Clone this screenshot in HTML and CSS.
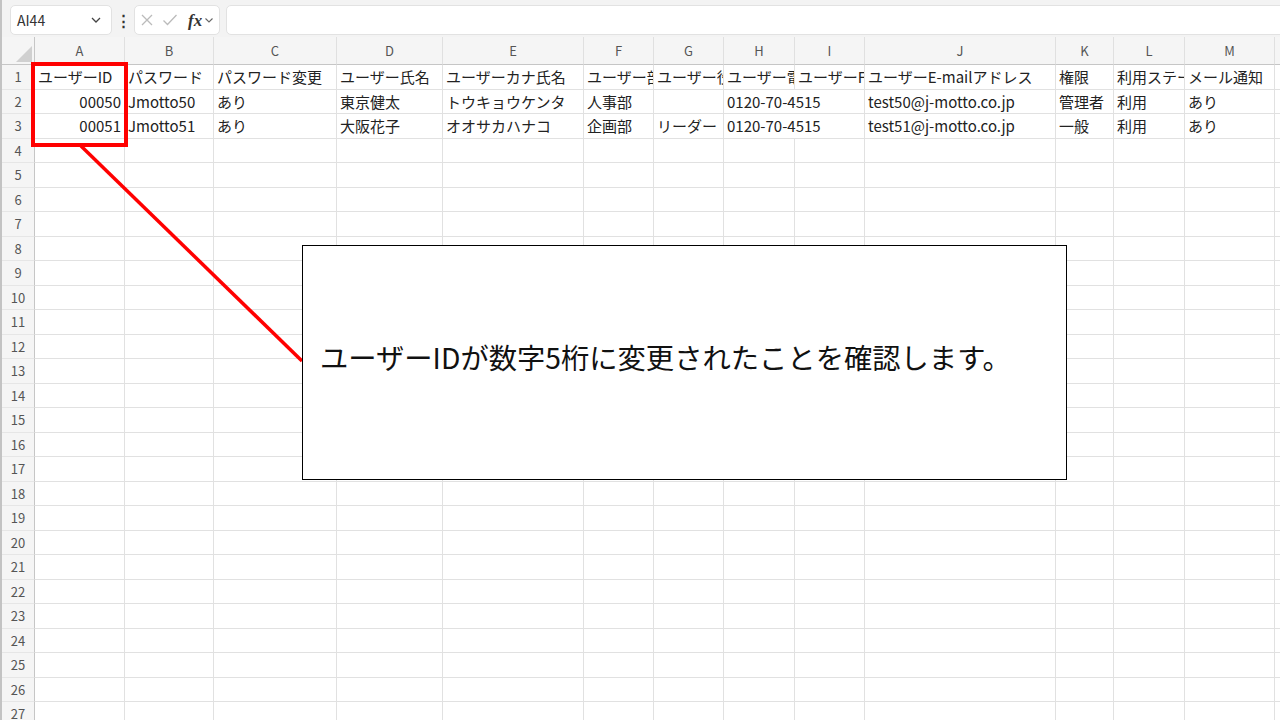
FILE: index.html
```html
<!DOCTYPE html>
<html lang="ja">
<head>
<meta charset="utf-8">
<title>Sheet</title>
<link rel="stylesheet" href="styles.css">
</head>
<body>
<div class="page">
  <div class="toolbar">
    <div class="namebox">
      <span class="name">AI44</span>
      <svg class="chev" width="12" height="8" viewBox="0 0 12 8"><path d="M2 2l4 4 4-4" fill="none" stroke="#444" stroke-width="1.3"/></svg>
    </div>
    <div class="dots">⋮</div>
    <div class="fbtns">
      <svg width="14" height="14" viewBox="0 0 14 14"><path d="M2 2l10 10M12 2L2 12" stroke="#bbb" stroke-width="1.3" fill="none"/></svg>
      <svg width="16" height="14" viewBox="0 0 16 14"><path d="M1.5 7.5l4 4L14.5 2" stroke="#bbb" stroke-width="1.3" fill="none"/></svg>
      <span class="fx">fx</span>
      <svg width="10" height="7" viewBox="0 0 10 7"><path d="M1.5 1.5l3.5 3.5 3.5-3.5" fill="none" stroke="#666" stroke-width="1.1"/></svg>
    </div>
    <div class="finput"></div>
  </div>

  <div class="sheet">
    <div class="row head">
      <div class="corner"><span class="tri"></span></div>
      <div>A</div><div>B</div><div>C</div><div>D</div><div>E</div><div>F</div><div>G</div><div>H</div><div>I</div><div>J</div><div>K</div><div>L</div><div>M</div><div></div>
    </div>
    <div class="row">
      <div class="rh">1</div>
      <div>ユーザーID</div><div>パスワード</div><div>パスワード変更</div><div>ユーザー氏名</div><div>ユーザーカナ氏名</div><div>ユーザー部署</div><div>ユーザー役職</div><div>ユーザー電話番号</div><div>ユーザーFAX番号</div><div>ユーザーE-mailアドレス</div><div>権限</div><div>利用ステータス</div><div>メール通知</div><div></div>
    </div>
    <div class="row">
      <div class="rh">2</div>
      <div class="num">00050</div><div>Jmotto50</div><div>あり</div><div>東京健太</div><div>トウキョウケンタ</div><div>人事部</div><div></div><div class="span2">0120-70-4515</div><div>test50@j-motto.co.jp</div><div>管理者</div><div>利用</div><div>あり</div><div></div>
    </div>
    <div class="row">
      <div class="rh">3</div>
      <div class="num">00051</div><div>Jmotto51</div><div>あり</div><div>大阪花子</div><div>オオサカハナコ</div><div>企画部</div><div>リーダー</div><div class="span2">0120-70-4515</div><div>test51@j-motto.co.jp</div><div>一般</div><div>利用</div><div>あり</div><div></div>
    </div>
    <div class="row"><div class="rh">4</div><div></div><div></div><div></div><div></div><div></div><div></div><div></div><div></div><div></div><div></div><div></div><div></div><div></div><div></div></div>
    <div class="row"><div class="rh">5</div><div></div><div></div><div></div><div></div><div></div><div></div><div></div><div></div><div></div><div></div><div></div><div></div><div></div><div></div></div>
    <div class="row"><div class="rh">6</div><div></div><div></div><div></div><div></div><div></div><div></div><div></div><div></div><div></div><div></div><div></div><div></div><div></div><div></div></div>
    <div class="row"><div class="rh">7</div><div></div><div></div><div></div><div></div><div></div><div></div><div></div><div></div><div></div><div></div><div></div><div></div><div></div><div></div></div>
    <div class="row"><div class="rh">8</div><div></div><div></div><div></div><div></div><div></div><div></div><div></div><div></div><div></div><div></div><div></div><div></div><div></div><div></div></div>
    <div class="row"><div class="rh">9</div><div></div><div></div><div></div><div></div><div></div><div></div><div></div><div></div><div></div><div></div><div></div><div></div><div></div><div></div></div>
    <div class="row"><div class="rh">10</div><div></div><div></div><div></div><div></div><div></div><div></div><div></div><div></div><div></div><div></div><div></div><div></div><div></div><div></div></div>
    <div class="row"><div class="rh">11</div><div></div><div></div><div></div><div></div><div></div><div></div><div></div><div></div><div></div><div></div><div></div><div></div><div></div><div></div></div>
    <div class="row"><div class="rh">12</div><div></div><div></div><div></div><div></div><div></div><div></div><div></div><div></div><div></div><div></div><div></div><div></div><div></div><div></div></div>
    <div class="row"><div class="rh">13</div><div></div><div></div><div></div><div></div><div></div><div></div><div></div><div></div><div></div><div></div><div></div><div></div><div></div><div></div></div>
    <div class="row"><div class="rh">14</div><div></div><div></div><div></div><div></div><div></div><div></div><div></div><div></div><div></div><div></div><div></div><div></div><div></div><div></div></div>
    <div class="row"><div class="rh">15</div><div></div><div></div><div></div><div></div><div></div><div></div><div></div><div></div><div></div><div></div><div></div><div></div><div></div><div></div></div>
    <div class="row"><div class="rh">16</div><div></div><div></div><div></div><div></div><div></div><div></div><div></div><div></div><div></div><div></div><div></div><div></div><div></div><div></div></div>
    <div class="row"><div class="rh">17</div><div></div><div></div><div></div><div></div><div></div><div></div><div></div><div></div><div></div><div></div><div></div><div></div><div></div><div></div></div>
    <div class="row"><div class="rh">18</div><div></div><div></div><div></div><div></div><div></div><div></div><div></div><div></div><div></div><div></div><div></div><div></div><div></div><div></div></div>
    <div class="row"><div class="rh">19</div><div></div><div></div><div></div><div></div><div></div><div></div><div></div><div></div><div></div><div></div><div></div><div></div><div></div><div></div></div>
    <div class="row"><div class="rh">20</div><div></div><div></div><div></div><div></div><div></div><div></div><div></div><div></div><div></div><div></div><div></div><div></div><div></div><div></div></div>
    <div class="row"><div class="rh">21</div><div></div><div></div><div></div><div></div><div></div><div></div><div></div><div></div><div></div><div></div><div></div><div></div><div></div><div></div></div>
    <div class="row"><div class="rh">22</div><div></div><div></div><div></div><div></div><div></div><div></div><div></div><div></div><div></div><div></div><div></div><div></div><div></div><div></div></div>
    <div class="row"><div class="rh">23</div><div></div><div></div><div></div><div></div><div></div><div></div><div></div><div></div><div></div><div></div><div></div><div></div><div></div><div></div></div>
    <div class="row"><div class="rh">24</div><div></div><div></div><div></div><div></div><div></div><div></div><div></div><div></div><div></div><div></div><div></div><div></div><div></div><div></div></div>
    <div class="row"><div class="rh">25</div><div></div><div></div><div></div><div></div><div></div><div></div><div></div><div></div><div></div><div></div><div></div><div></div><div></div><div></div></div>
    <div class="row"><div class="rh">26</div><div></div><div></div><div></div><div></div><div></div><div></div><div></div><div></div><div></div><div></div><div></div><div></div><div></div><div></div></div>
    <div class="row"><div class="rh">27</div><div></div><div></div><div></div><div></div><div></div><div></div><div></div><div></div><div></div><div></div><div></div><div></div><div></div><div></div></div>
  </div>

  <div class="redbox"></div>
  <svg class="connector" width="1280" height="720" viewBox="0 0 1280 720"><line x1="81" y1="146" x2="302" y2="361" stroke="#ff0000" stroke-width="3.5"/></svg>
  <div class="callout"><p>ユーザーIDが数字5桁に変更されたことを確認します。</p></div>
</div>
</body>
</html>
```

FILE: styles.css
```css
* { box-sizing: border-box; }
html, body { margin: 0; padding: 0; }
body {
  width: 1280px;
  height: 720px;
  overflow: hidden;
  background: #fff;
  font-family: "Noto Sans CJK JP", "Noto Sans", sans-serif;
  color: #222;
}
.page {
  position: relative;
  width: 1280px;
  height: 720px;
  overflow: hidden;
  border-left: 2px solid #c3c3c3;
}
.toolbar {
  height: 37px;
  background: #f3f3f3;
  display: flex;
  align-items: flex-start;
  padding-top: 5px;
  padding-left: 8px;
}
.namebox {
  width: 102px;
  height: 30px;
  background: #fff;
  border: 1px solid #e2e2e2;
  border-radius: 5px;
  display: flex;
  align-items: center;
  justify-content: space-between;
  padding: 0 9px 0 6px;
}
.name { font-size: 14px; color: #333; }
.dots {
  width: 22px;
  text-align: center;
  font-size: 15px;
  line-height: 30px;
  color: #333;
  font-weight: bold;
}
.fbtns {
  width: 86px;
  height: 30px;
  background: #fff;
  border: 1px solid #e2e2e2;
  border-radius: 5px;
  display: flex;
  align-items: center;
  padding-left: 5px;
  gap: 8px;
}
.fx {
  font-family: "Liberation Serif", serif;
  font-style: italic;
  font-weight: bold;
  font-size: 17px;
  color: #333;
  margin-left: 2px;
  margin-right: -6px;
  line-height: 1;
}
.finput {
  flex: 1;
  height: 30px;
  margin-left: 6px;
  margin-right: -10px;
  background: #fff;
  border: 1px solid #e2e2e2;
  border-radius: 5px;
}
.sheet { display: flex; flex-direction: column; }
.row {
  display: grid;
  grid-template-columns: 33px 90px 89px 123px 106px 141px 70px 70px 71px 70px 191px 58px 71px 90px 1fr;
  height: 24.5px;
}
.row > div {
  border-right: 1px solid #e1e1e1;
  border-bottom: 1px solid #e1e1e1;
  overflow: hidden;
  white-space: nowrap;
  font-size: 15px;
  line-height: 23.5px;
  padding: 0 3px;
  color: #222;
}
.row > .num { text-align: right; padding-right: 3px; }
.row > .span2 { grid-column: span 2; }
.row > .rh {
  background: #f5f5f5;
  border-right: 1px solid #c6c6c6;
  border-bottom: 1px solid #e6e6e6;
  text-align: center;
  font-size: 13px;
  color: #555;
  padding: 0;
}
.row.head { height: 28px; }
.row.head > div {
  background: #f5f5f5;
  border-bottom: 1px solid #c6c6c6;
  border-right: 1px solid #e0e0e0;
  text-align: center;
  font-size: 13px;
  line-height: 27px;
  color: #555;
}
.row.head > .corner {
  position: relative;
  border-right: 1px solid #c6c6c6;
}
.tri {
  position: absolute;
  right: 2px;
  bottom: 2px;
  width: 0;
  height: 0;
  border-left: 16px solid transparent;
  border-bottom: 16px solid #d0d0d0;
}
.redbox {
  position: absolute;
  left: 29px;
  top: 62px;
  width: 97px;
  height: 85px;
  border: 4px solid #ff0000;
}
.connector {
  position: absolute;
  left: -2px;
  top: 0;
  pointer-events: none;
}
.callout {
  position: absolute;
  left: 300px;
  top: 245px;
  width: 765px;
  height: 235px;
  background: #fff;
  border: 1px solid #000;
  display: flex;
  align-items: center;
  padding-left: 17px;
  padding-bottom: 12px;
}
.callout p {
  margin: 0;
  font-size: 28.3px;
  color: #111;
  white-space: nowrap;
}
```
